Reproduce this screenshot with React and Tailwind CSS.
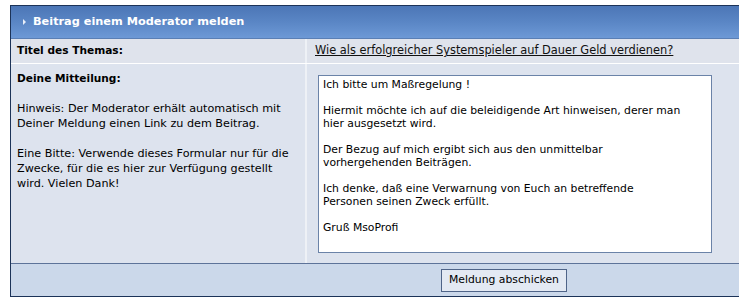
import React from 'react';

const messageLines = [
  'Ich bitte um Maßregelung !',
  '',
  'Hiermit möchte ich auf die beleidigende Art hinweisen, derer man',
  'hier ausgesetzt wird.',
  '',
  'Der Bezug auf mich ergibt sich aus den unmittelbar',
  'vorhergehenden Beiträgen.',
  '',
  'Ich denke, daß eine Verwarnung von Euch an betreffende',
  'Personen seinen Zweck erfüllt.',
  '',
  'Gruß MsoProfi',
];

export default function App() {
  return (
    <div className="bg-white h-[298px] overflow-hidden pt-[5px] pl-[10px] font-['DejaVu_Sans',Verdana,sans-serif] text-[10px] text-black">
      <div className="w-[760px] border-t border-l border-b border-[#1c3358]">
        {/* header */}
        <div className="h-[33px] flex items-center pl-[12px] bg-gradient-to-b from-[#4c76b6] via-[#5a86c5] to-[#6d99d6] border-b border-[#5a7fb5]">
          <span className="w-0 h-0 border-y-[3px] border-y-transparent border-l-[3px] border-l-[#e8eef8] mr-[7px]"></span>
          <span className="text-white font-bold text-[11.3px]">Beitrag einem Moderator melden</span>
        </div>

        {/* title row */}
        <div className="flex h-[25px] bg-[#dfe3ec] border-b border-white">
          <div className="w-[296px] flex items-center pl-[6px] font-bold text-[10.6px] border-r-2 border-[#eef1f6]">Titel des Themas:</div>
          <div className="flex-1 flex items-center pl-[8px]">
            <a href="#" className="underline text-[#111] text-[11.4px]">Wie als erfolgreicher Systemspieler auf Dauer Geld verdienen?</a>
          </div>
        </div>

        {/* message row */}
        <div className="flex h-[199px] bg-[#dde3ee]">
          <div className="w-[296px] pl-[6px] pt-[7px] border-r-2 border-[#eef1f6] text-[11.2px] leading-[15px]">
            <p className="font-bold text-[10.6px]">Deine Mitteilung:</p>
            <p className="mt-[15px]">Hinweis: Der Moderator erhält automatisch mit<br />Deiner Meldung einen Link zu dem Beitrag.</p>
            <p className="mt-[15px]">Eine Bitte: Verwende dieses Formular nur für die<br />Zwecke, für die es hier zur Verfügung gestellt<br />wird. Vielen Dank!</p>
          </div>
          <div className="flex-1 pl-[11px] pt-[11px]">
            <div className="w-[394px] h-[178px] bg-white border border-[#6b83a8] pl-[4px] pt-[2px] text-[10.8px] leading-[13px] whitespace-nowrap">
              {messageLines.map((line, i) => (
                <div key={i} className="h-[13px]">{line}</div>
              ))}
            </div>
          </div>
        </div>

        {/* footer */}
        <div className="h-[33px] bg-[#cbd8ea] border-t border-[#5d7399] flex items-center pl-[430px]">
          <button className="w-[126px] h-[23px] bg-[#e3e9f3] border border-[#4f6488] text-[10.8px] text-black">Meldung abschicken</button>
        </div>
      </div>
    </div>
  );
}
